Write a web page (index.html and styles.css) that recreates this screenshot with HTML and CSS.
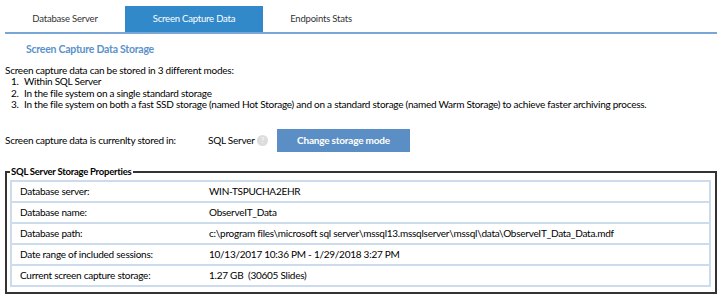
FILE: index.html
```html
<!DOCTYPE html>
<html lang="en">
<head>
  <meta charset="UTF-8">
  <title>Screen Capture Data</title>
  <link rel="stylesheet" href="styles.css">
</head>
<body>
  <div class="tabs">
    <div class="tab">Database Server</div>
    <div class="tab active">Screen Capture Data</div>
    <div class="tab">Endpoints Stats</div>
  </div>

  <h3 class="section-title">Screen Capture Data Storage</h3>

  <div class="intro">
    <p>Screen capture data can be stored in 3 different modes:</p>
    <ol>
      <li>Within SQL Server</li>
      <li>In the file system on a single standard storage</li>
      <li>In the file system on both a fast SSD storage (named Hot Storage) and on a standard storage (named Warm Storage) to achieve faster archiving process.</li>
    </ol>
  </div>

  <div class="current-row">
    <span class="current-label">Screen capture data is currenlty stored in:</span>
    <span class="current-value">SQL Server</span>
    <span class="help-icon">?</span>
    <button class="change-btn">Change storage mode</button>
  </div>

  <fieldset class="props">
    <legend>SQL Server Storage Properties</legend>
    <table class="props-table">
      <tr><td>Database server:</td><td>WIN-TSPUCHA2EHR</td></tr>
      <tr><td>Database name:</td><td>ObserveIT_Data</td></tr>
      <tr><td>Database path:</td><td>c:\program files\microsoft sql server\mssql13.mssqlserver\mssql\data\ObserveIT_Data_Data.mdf</td></tr>
      <tr><td>Date range of included sessions:</td><td>10/13/2017 10:36 PM - 1/29/2018 3:27 PM</td></tr>
      <tr><td>Current screen capture storage:</td><td>1.27 GB &nbsp;(30605 Slides)</td></tr>
    </table>
  </fieldset>
</body>
</html>
```

FILE: styles.css
```css
body {
  font-family: 'Lato', sans-serif;
  font-size: 10px;
  letter-spacing: -0.25px;
  color: #000;
  background: #fff;
  margin: 0;
  padding: 6px 5px 0 5px;
}

.tabs {
  display: flex;
  border-bottom: 2px solid #78a7d6;
  height: 26px;
}

.tab {
  width: 120px;
  text-align: center;
  line-height: 26px;
  font-size: 9.5px;
  letter-spacing: -0.2px;
  color: #333;
}

.tab.active {
  width: 138px;
  background-color: #3289c9;
  color: #fff;
}

.tab:last-child {
  width: 116px;
}

.section-title {
  margin: 0;
  padding: 8px 0 0 21px;
  font-size: 10.5px;
  font-weight: bold;
  line-height: 14px;
  color: #5b92cb;
}

.intro {
  margin-top: 8px;
}

.intro p {
  margin: 0;
  line-height: 12px;
}

.intro ol {
  margin: 0;
  padding-left: 16px;
}

.intro li {
  line-height: 11.5px;
  padding-left: 3px;
}

.current-row {
  display: flex;
  align-items: center;
  margin-top: 18px;
  height: 23px;
  white-space: nowrap;
}

.current-label {
  width: 203px;
}

.current-value {
  width: 49px;
}

.help-icon {
  width: 11px;
  height: 11px;
  border-radius: 50%;
  background: #dcdcdc;
  color: #f4f4f4;
  font-size: 8px;
  font-weight: bold;
  line-height: 11px;
  text-align: center;
  margin-right: 9px;
}

.change-btn {
  width: 133px;
  height: 23px;
  border: none;
  background-color: #5b8ec4;
  color: #fff;
  font-family: 'Lato', sans-serif;
  font-size: 10px;
  letter-spacing: -0.2px;
  font-weight: bold;
  padding: 0;
}

.props {
  margin: 14px 0 0 0;
  width: 712px;
  box-sizing: border-box;
  border: 2px solid #333;
  padding: 2px 4px 5px 3px;
}

.props legend {
  font-weight: bold;
  font-size: 9.5px;
  line-height: 12px;
  padding: 0 2px 0 1px;
}

.props-table {
  width: 100%;
  border-collapse: collapse;
  border: 2px solid #cddcec;
}

.props-table td {
  border-bottom: 2px solid #cddcec;
  height: 19px;
  padding: 0;
  vertical-align: middle;
}

.props-table td:first-child {
  width: 189px;
  padding-left: 8px;
}
```
